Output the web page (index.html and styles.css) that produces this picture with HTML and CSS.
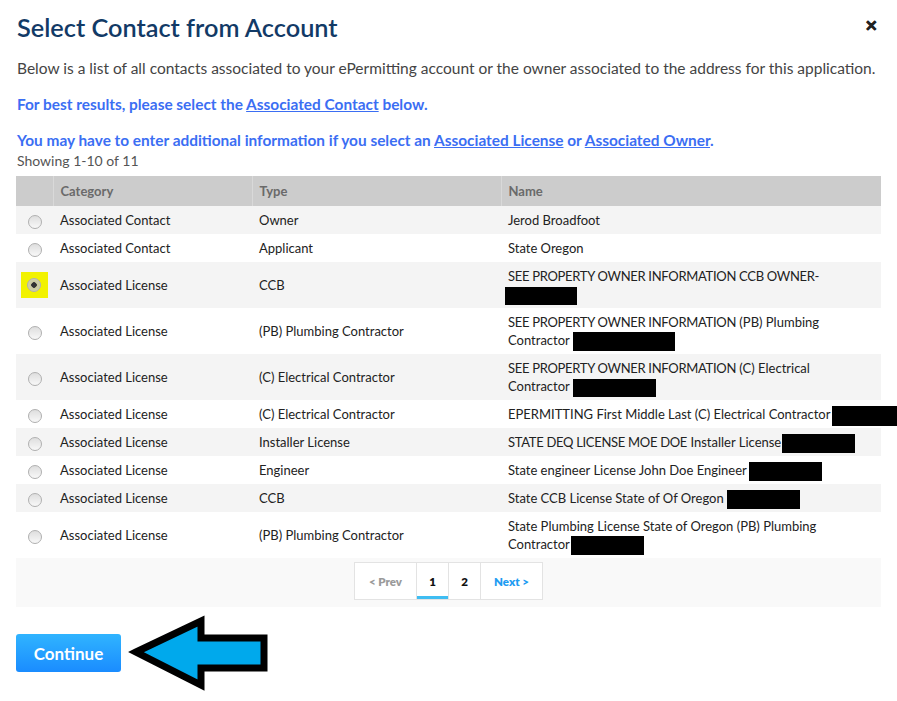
FILE: index.html
```html
<!DOCTYPE html>
<html>
<head>
<meta charset="utf-8">
<link rel="stylesheet" href="styles.css">
</head>
<body>
<div class="dialog">
  <div class="head">
    <h1 class="title">Select Contact from Account</h1>
    <span class="close">&#x2715;</span>
  </div>
  <p class="intro">Below is a list of all contacts associated to your ePermitting account or the owner associated to the address for this application.</p>
  <p class="hint">For best results, please select the <a class="lnk">Associated Contact</a> below.</p>
  <p class="hint hint2">You may have to enter additional information if you select an <a class="lnk">Associated License</a> or <a class="lnk">Associated Owner</a>.</p>
  <div class="count">Showing 1-10 of 11</div>

  <table class="grid">
    <colgroup><col class="c0"><col class="c1"><col class="c2"><col class="c3"></colgroup>
    <thead>
      <tr><th></th><th>Category</th><th>Type</th><th>Name</th></tr>
    </thead>
    <tbody>
      <tr class="odd"><td><span class="radio"></span></td><td>Associated Contact</td><td>Owner</td><td>Jerod Broadfoot</td></tr>
      <tr><td><span class="radio"></span></td><td>Associated Contact</td><td>Applicant</td><td>State Oregon</td></tr>
      <tr class="odd"><td><span class="hl"><span class="radio on"></span></span></td><td>Associated License</td><td>CCB</td><td><span class="caps">SEE PROPERTY OWNER INFORMATION CCB OWNER-</span><br><span class="redact r3"></span></td></tr>
      <tr><td><span class="radio"></span></td><td>Associated License</td><td>(PB) Plumbing Contractor</td><td><span class="caps">SEE PROPERTY OWNER INFORMATION</span> (PB) Plumbing<br>Contractor <span class="redact r4"></span></td></tr>
      <tr class="odd"><td><span class="radio"></span></td><td>Associated License</td><td>(C) Electrical Contractor</td><td><span class="caps">SEE PROPERTY OWNER INFORMATION</span> (C) Electrical<br>Contractor <span class="redact r5"></span></td></tr>
      <tr><td><span class="radio"></span></td><td>Associated License</td><td>(C) Electrical Contractor</td><td>EPERMITTING First Middle Last (C) Electrical Contractor <span class="redact r6"></span></td></tr>
      <tr class="odd"><td><span class="radio"></span></td><td>Associated License</td><td>Installer License</td><td><span class="caps">STATE DEQ LICENSE MOE DOE</span> Installer License <span class="redact r7"></span></td></tr>
      <tr><td><span class="radio"></span></td><td>Associated License</td><td>Engineer</td><td>State engineer License John Doe Engineer<span class="redact r8"></span></td></tr>
      <tr class="odd"><td><span class="radio"></span></td><td>Associated License</td><td>CCB</td><td>State CCB License State of Of Oregon <span class="redact r9"></span></td></tr>
      <tr><td><span class="radio"></span></td><td>Associated License</td><td>(PB) Plumbing Contractor</td><td>State Plumbing License State of Oregon (PB) Plumbing<br>Contractor<span class="redact r10"></span></td></tr>
    </tbody>
  </table>
  <div class="pager-bar">
    <div class="pager">
      <span class="pg prev">&lt; Prev</span>
      <span class="pg num active">1</span>
      <span class="pg num">2</span>
      <span class="pg next">Next &gt;</span>
    </div>
  </div>

  <div class="actions">
    <button class="continue">Continue</button>
    <svg class="arrow" width="146" height="78" viewBox="0 0 146 78">
      <polygon points="10,38 75,7 75,24 138,24 138,54 75,54 75,71" fill="#00a9ec" stroke="#000" stroke-width="7" stroke-linejoin="miter"/>
    </svg>
  </div>
</div>
</body>
</html>
```
FILE: styles.css
```css
html, body {
  margin: 0;
  padding: 0;
  background: #fff;
  overflow-x: hidden;
}
body {
  font-family: Lato, "Open Sans", "Liberation Sans", sans-serif;
  color: #333;
}
.dialog {
  padding: 12px 16px 0 16px;
}
.head {
  display: flex;
  justify-content: space-between;
  align-items: flex-start;
}
.title {
  margin: 0 0 0 1px;
  font-size: 25.3px;
  line-height: 30px;
  font-weight: 600;
  color: #123a66;
}
.close {
  font-size: 15px;
  font-weight: 700;
  color: #222;
  margin: 6px 3px 0 0;
  line-height: 14px;
  -webkit-text-stroke: 0.6px #222;
}
.intro {
  margin: 16px 0 0 1px;
  font-size: 15.5px;
  line-height: 20px;
  color: #444;
}
.hint {
  margin: 16px 0 0 1px;
  font-size: 15.4px;
  line-height: 20px;
  font-weight: 700;
  color: #3b6ef3;
}
.lnk {
  text-decoration: underline;
  color: #3b6ef3;
}
.count {
  margin: 2px 0 0 1px;
  font-size: 14px;
  line-height: 18px;
  color: #555;
}
.grid {
  margin-top: 6px;
  width: 865px;
  border-collapse: collapse;
  table-layout: fixed;
  font-size: 13px;
  color: #222;
}
.c0 { width: 37px; }
.c1 { width: 199px; }
.c2 { width: 249px; }
.c3 { width: 380px; }
.grid th {
  background: #cccccc;
  color: #6a6a6a;
  font-weight: 700;
  text-align: left;
  height: 30px;
  padding: 0 7px;
  border-left: 1px solid #d9d9d9;
}
.grid th:first-child { border-left: none; }
.grid td {
  padding: 5px 7px;
  line-height: 18px;
  vertical-align: middle;
  white-space: nowrap;
  overflow: visible;
}
.grid td:first-child {
  padding: 0;
  text-align: center;
  line-height: 0;
}
.grid tr.odd td { background: #f4f4f4; }
.caps { letter-spacing: -0.3px; }
.radio {
  display: inline-block;
  width: 12px;
  height: 12px;
  border-radius: 50%;
  border: 1px solid #b0b0b0;
  background: linear-gradient(#dedede, #f8f8f8);
  vertical-align: middle;
  margin-top: 3px;
  box-sizing: content-box;
}
.radio.on {
  background: radial-gradient(circle, #333 0, #333 2.5px, #c9c9a0 3px, #d8d8b0 100%);
  margin-top: 0;
}
.hl {
  display: inline-flex;
  align-items: center;
  justify-content: center;
  width: 27px;
  height: 26px;
  background: #f2f200;
  vertical-align: middle;
  margin-left: -1px;
}
.redact {
  display: inline-block;
  background: #000;
  vertical-align: middle;
  height: 19px;
  margin-top: -3px;
  margin-bottom: -3px;
}
.r3 { width: 72px; margin-left: -3px; height: 18px; }
.r4 { width: 102px; }
.r5 { width: 83px; height: 18px; }
.r6 { width: 69px; height: 20px; margin-left: -2px; }
.r7 { width: 73px; margin-left: -3px; }
.r8 { width: 73px; margin-left: 2px; }
.r9 { width: 73px; }
.r10 { width: 73px; margin-left: 1px; }
.pager-bar {
  width: 865px;
  background: #f9f9f9;
  display: flex;
  justify-content: center;
  padding: 4px 0 7px;
}
.pager {
  display: flex;
  border: 1px solid #e3e3e3;
  background: #fff;
  height: 36px;
}
.pg {
  display: flex;
  align-items: center;
  justify-content: center;
  font-size: 11.5px;
  font-weight: 800;
  color: #111;
  border-left: 1px solid #e3e3e3;
  box-sizing: border-box;
}
.pg:first-child { border-left: none; }
.prev { width: 61px; color: #9a9a9a; }
.num { width: 32px; }
.next { width: 62px; color: #1e9cf2; }
.active { box-shadow: inset 0 -3px 0 #3fbdf2; }
.actions {
  display: flex;
  align-items: center;
  gap: 5px;
  margin-top: 7px;
}
.continue {
  width: 105px;
  height: 38px;
  border: none;
  border-radius: 3px;
  background: linear-gradient(#30b4ff, #1a8cff);
  color: #fff;
  font-family: Lato, "Open Sans", sans-serif;
  font-size: 17px;
  font-weight: 700;
  padding: 0;
}
.arrow {
  display: block;
}
```
